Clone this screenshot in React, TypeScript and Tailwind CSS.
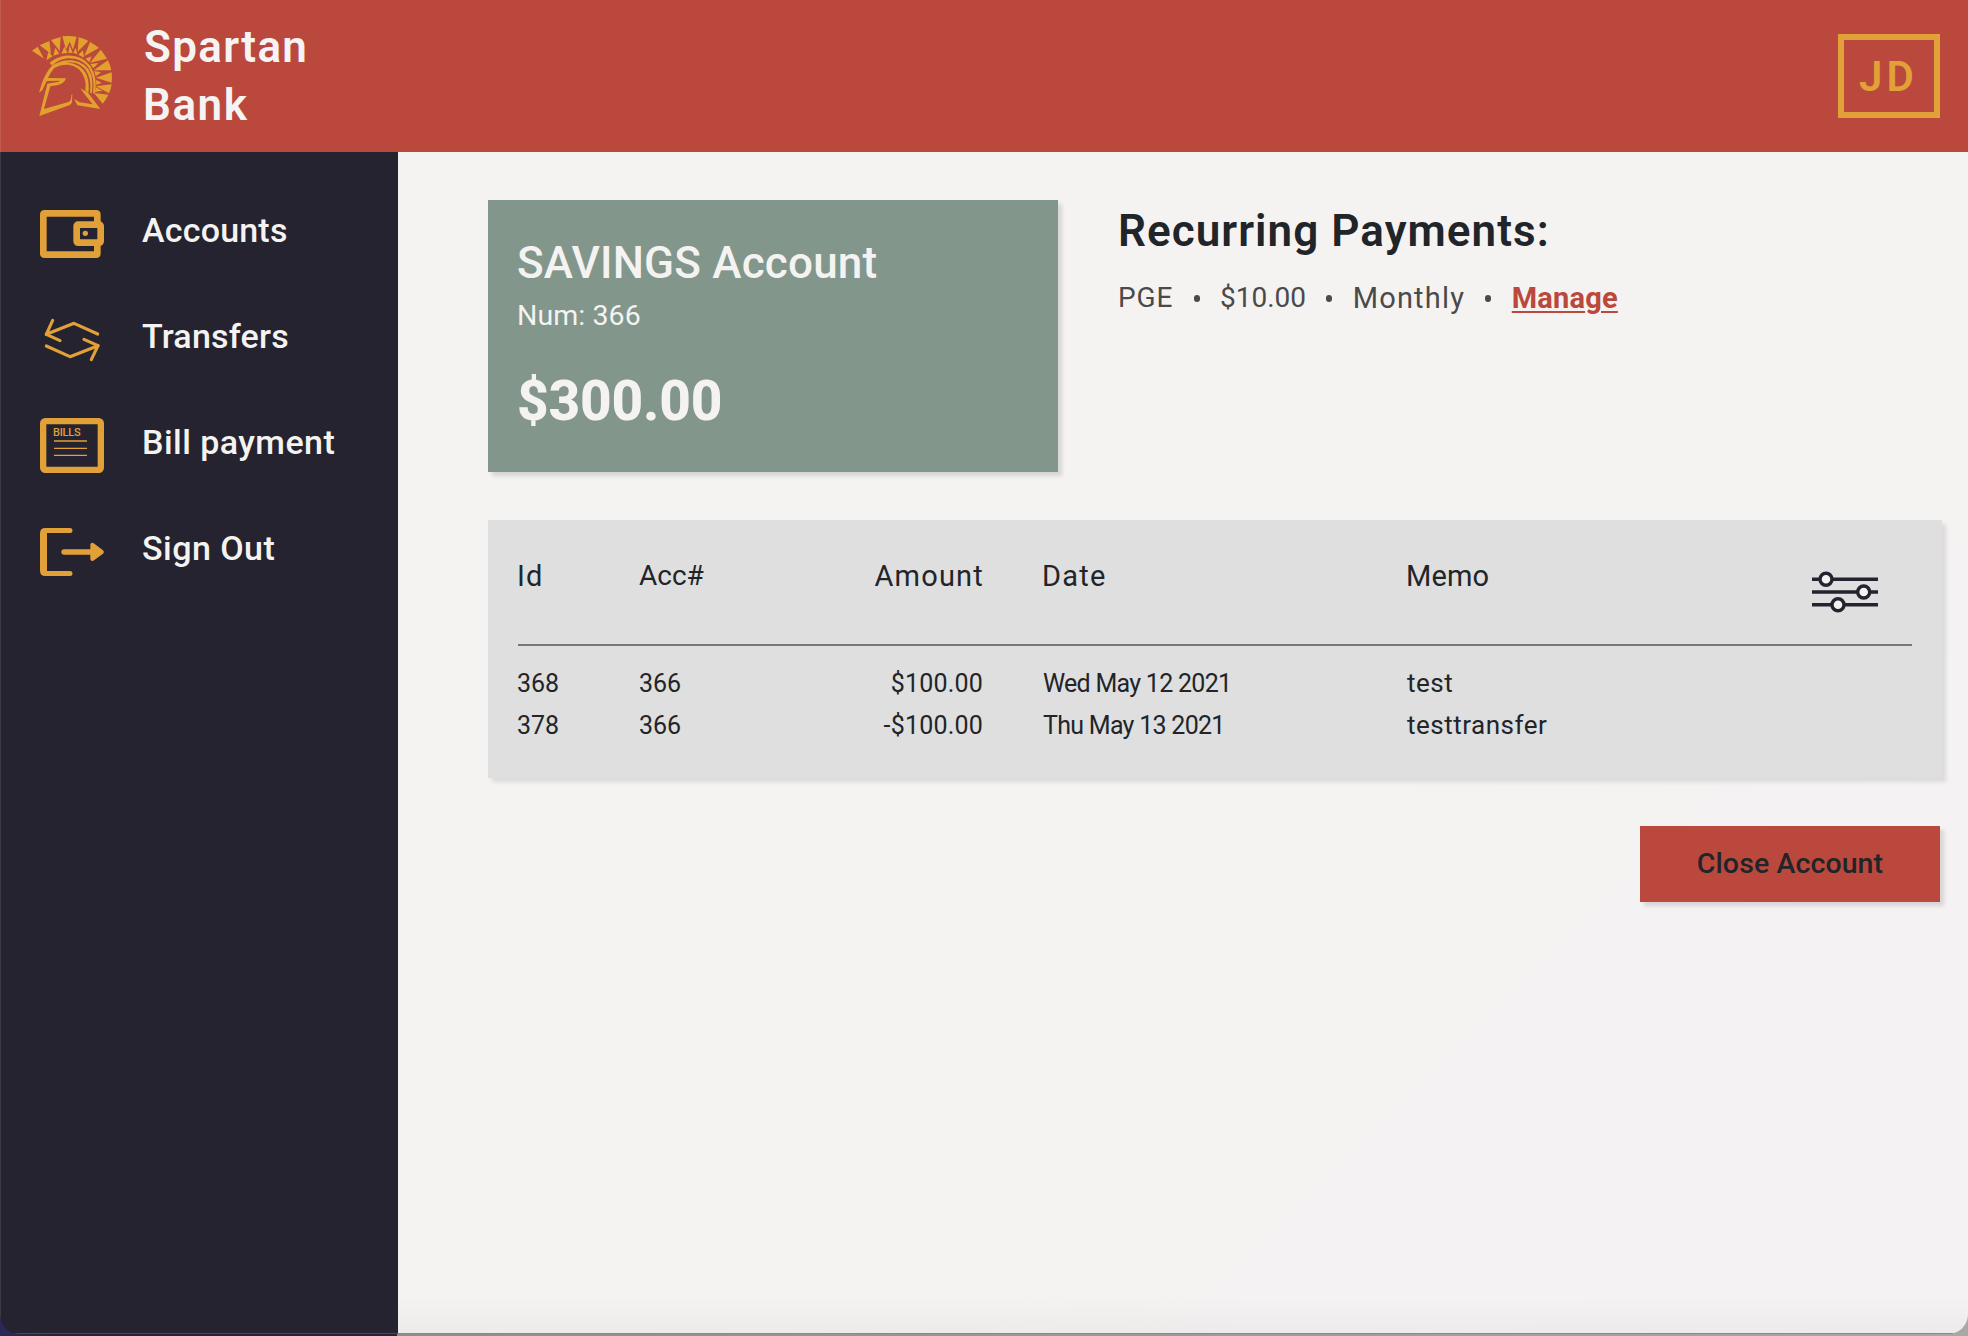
import type { ReactNode } from 'react';

function SpartanLogo() {
  return (
    <svg viewBox="36 33 240 240" className="h-20 w-20 shrink-0 overflow-visible" fill="#e2a02e">
      {/* crest, outer plumes */}
      <path d="M36 77 L53 65 L72 101 Z M59 61 L88 48 L93 86 Z M93 45 L122 36 L119 78 Z M127 34 Q148 31 170 35 L159 74 L149 50 L138 74 Z M176 37 Q192 41 205 48 L173 80 Z M210 51 Q225 59 237 69 L193 93 Z M242 74 Q253 87 261 101 L210 113 Z M264 106 Q271 120 274 136 L221 136 Z M275 142 Q277 157 275 173 L228 158 Z M275 178 Q273 192 267 205 L228 184 Z M265 209 Q258 224 248 236 L222 204 Z" />
      {/* crest, inner plumes */}
      <path d="M79 106 L98 94 L85 80 Z M100 92 L118 86 L106 68 Z M124 86 L143 83 L133 65 Z M145 83 L158 84 L149 60 Z M160 84 L172 87 L167 68 Z M175 89 L192 98 L189 76 Z M196 101 L208 112 L215 94 Z M211 117 L220 130 L235 114 Z M223 138 L227 154 L243 142 Z M228 165 L229 180 L245 173 Z M228 187 L224 201 L247 197 Z" />
      {/* dome */}
      <path d="M89 113 Q108 96 134 92 Q185 87 211 123 Q235 160 224 207 L219 203 Q226 160 206 128 Q184 98 142 100 Q118 103 99 119 Q93 122 89 113 Z" />
      <path d="M57 203 L65 176 Q78 141 97 121 Q127 103 157 106 Q200 112 214 150 Q220 180 215 207 L210 202 Q214 172 204 147 Q189 113 150 112 L140 113 Q185 115 201 152 Q209 178 205 204 L196 195 Q199 175 193 158 Q180 123 144 119 Q121 118 103 129 Q90 144 84 159 L138 160 Q133 176 114 180 L91 184 L72 252 L145 231 Q155 226 154 210 L157 208 L156 231 Q154 239 148 241 L58 273 L82 176 L108 172 Q118 171 121 167 L80 168 L67 196 Z" />
      {/* cheek guard */}
      <path d="M181 190 L203 202 L241 252 L172 241 L162 221 L179 232 L218 238 L196 211 Z" />
    </svg>
  );
}

function WalletIcon() {
  return (
    <svg viewBox="120 90 192 144" className="h-12 w-16" fill="none" stroke="#e2a038">
      <path d="M292 130 V104 Q292 100 288 100 H134 Q130 100 130 104 V220 Q130 224 134 224 H288 Q292 224 292 220 V192" strokeWidth="20" />
      <rect x="230" y="134" width="72" height="54" rx="4" strokeWidth="20" />
      <circle cx="256" cy="160" r="8" fill="#e2a038" stroke="none" />
    </svg>
  );
}

function TransferIcon() {
  return (
    <svg viewBox="120 408 192 144" className="h-12 w-16" fill="none" stroke="#e2a038" strokeWidth="9.5" strokeLinejoin="round" strokeLinecap="round">
      <path d="M158 421 L139 463 L180 482" />
      <path d="M139 463 L222 430 L293 462" />
      <path d="M139 498 L210 530 L294 497" />
      <path d="M252 478 L294 497 L274 539" />
    </svg>
  );
}

function BillsIcon() {
  return (
    <svg viewBox="120 84 192 165" className="mb-px h-[55px] w-16" fill="none" stroke="#e2a038">
      <rect x="129.5" y="93.5" width="173" height="146" rx="6" strokeWidth="19" />
      <text x="159" y="137" fill="#e2a038" stroke="none" fontFamily="Roboto, sans-serif" fontWeight="500" fontSize="33" textLength="83">
        BILLS
      </text>
      <path d="M162 153 H261 M162 175 H261 M162 196 H261" strokeWidth="4" />
    </svg>
  );
}

function SignOutIcon() {
  return (
    <svg viewBox="120 414 192 144" className="h-12 w-16" fill="#e2a038">
      <path d="M210 414 A7.5 7.5 0 0 1 210 429 H141 V543 H210 A7.5 7.5 0 0 1 210 558 H136 Q120 558 120 542 V430 Q120 414 136 414 Z" />
      <path d="M192 478 H271 V463 Q273 456 280 459 L308 480 Q315 486 308 492 L280 512 Q273 515 271 508 V494 H192 A8 8 0 0 1 192 478 Z" />
    </svg>
  );
}

function FilterIcon() {
  return (
    <svg viewBox="0 0 66 42" className="h-[42px] w-[66px]" stroke="#24232f">
      <path d="M0 8.3 H66 M0 21 H66 M0 33.7 H66" strokeWidth="3.4" />
      <g fill="#f5f3f1" strokeWidth="3.4">
        <circle cx="14" cy="8.3" r="6" />
        <circle cx="51.7" cy="21" r="6" />
        <circle cx="26" cy="33.7" r="6" />
      </g>
    </svg>
  );
}

function NavItem({ icon, children }: { icon: ReactNode; children: ReactNode }) {
  return (
    <a className="flex h-[106px] items-center pl-[39px] text-[34px] leading-[42px] font-medium text-[#f5f3f1]">
      <span className="mr-[38px] pt-1.5">{icon}</span>
      <span className="-mt-[3px]">{children}</span>
    </a>
  );
}

function Dot() {
  return <span className="mt-px h-[7px] w-1.5 rounded-full bg-[#4a4a4a]" />;
}

const transactions = [
  { id: 368, acc: 366, amount: '$100.00', date: 'Wed May 12 2021', memo: 'test' },
  { id: 378, acc: 366, amount: '-$100.00', date: 'Thu May 13 2021', memo: 'testtransfer' },
];

export default function App() {
  return (
    <div className="h-[1336px] w-[1968px] overflow-hidden bg-[linear-gradient(90deg,#2a2a58_0,#272038_60px,#272038_397px,#8f8e8d_397px,#a9a8a7_100%)] font-['Roboto',sans-serif] text-[#212529]">
      <div className="flex h-[1334px] flex-col overflow-hidden rounded-b-[20px]">
        <header className="flex h-[152px] shrink-0 items-center justify-between border-l border-l-[#c25c51] bg-[#bb483c] pr-7 pl-[31px]">
          <div className="flex items-center">
            <SpartanLogo />
            <div className="-mt-px ml-8 text-[44px] leading-[58px] font-semibold text-[#f5f3f3]">
              <div className="tracking-[1.3px]">Spartan</div>
              <div className="-ml-px tracking-[1.5px]">Bank</div>
            </div>
          </div>
          <div className="flex h-[84px] w-[102px] items-center border-6 border-[#e2a038] pt-px pl-[15px] text-[42px] leading-none font-semibold tracking-[4px] text-[#e2a038]">
            JD
          </div>
        </header>
        <div className="flex min-h-0 flex-1">
          <nav className="w-[398px] shrink-0 border-b border-l border-b-[#4a4854] border-l-[#3c3a46] bg-[#24232f] pt-[26px]">
            <NavItem icon={<WalletIcon />}><span className="tracking-[0.2px]">Accounts</span></NavItem>
            <NavItem icon={<TransferIcon />}><span className="tracking-[0.2px]">Transfers</span></NavItem>
            <NavItem icon={<BillsIcon />}><span className="tracking-[0.45px]">Bill payment</span></NavItem>
            <NavItem icon={<SignOutIcon />}><span className="tracking-[0.45px]">Sign Out</span></NavItem>
          </nav>
          <main className="flex-1 border-b border-b-[#8a8988] bg-[linear-gradient(180deg,transparent_1145px,rgba(0,0,0,0.03)_100%),linear-gradient(135deg,#f5f3f1_60%,#f4f2f3_85%)] pt-12 pl-[90px]">
            <div className="flex">
              <section className="h-[272px] w-[570px] bg-[#82968c] pt-[34px] pl-[30px] text-[#f5f3f1] shadow-[4px_4px_4px_rgba(0,0,0,0.12)]">
                <h1 className="-ml-px text-[44px] leading-[58px] font-medium tracking-[0.2px]">SAVINGS Account</h1>
                <p className="mt-[3px] -ml-px text-[28.5px] leading-[42px] tracking-[0.1px]">Num: 366</p>
                <p className="mt-[29px] -ml-px text-[55px] leading-[70px] font-extrabold tracking-[-0.2px]">$300.00</p>
              </section>
              <section className="ml-15 pt-0.5">
                <h2 className="text-[44px] leading-[58px] font-semibold tracking-[1.05px]">Recurring Payments:</h2>
                <div className="mt-[17px] flex items-center gap-[20.3px] text-[28px] leading-[42px] text-[#4a4a4a]">
                  <span className="tracking-[0.9px]">PGE</span>
                  <Dot />
                  <span>$10.00</span>
                  <Dot />
                  <span className="text-[29px] tracking-[1.2px]">Monthly</span>
                  <Dot />
                  <a className="text-[29px] font-bold tracking-[0.2px] text-[#bb483c] underline decoration-2 underline-offset-[3px]">Manage</a>
                </div>
              </section>
            </div>
            <section className="mt-12 h-[258px] w-[1454px] bg-[#dfdfdf] px-[30px] shadow-[4px_4px_4px_rgba(0,0,0,0.1)]">
              <div className="grid h-[126px] grid-cols-[121px_120px_225px_423px_1fr_100px] border-b-2 border-[#777] pt-[35px] text-[29px] leading-[42px]">
                <span className="-ml-px tracking-[1px]">Id</span>
                <span className="text-[28px]">Acc#</span>
                <span className="text-right tracking-[1.2px]">Amount</span>
                <span className="pl-[58px] tracking-[1.2px]">Date</span>
                <span className="-ml-px tracking-[0.15px]">Memo</span>
                <span className="pt-4"><FilterIcon /></span>
              </div>
              <div className="pt-[17px] text-[25px] leading-[42px]">
                {transactions.map((t) => (
                  <div key={t.id} className="grid h-[42px] grid-cols-[121px_120px_225px_423px_1fr]">
                    <span className="-ml-px">{t.id}</span>
                    <span>{t.acc}</span>
                    <span className="mr-px text-right tracking-[0.2px]">{t.amount}</span>
                    <span className="pl-[59px] tracking-[-0.72px]">{t.date}</span>
                    <span className="-mt-px text-[26px] tracking-[0.5px]">{t.memo}</span>
                  </div>
                ))}
              </div>
            </section>
            <div className="mt-12 flex justify-end pr-7">
              <button className="h-[76px] w-[300px] bg-[#bb483c] pb-px text-[28.5px] leading-[42px] font-medium tracking-[0.1px] shadow-[4px_4px_4px_rgba(0,0,0,0.12)]">
                Close Account
              </button>
            </div>
          </main>
        </div>
      </div>
    </div>
  );
}
